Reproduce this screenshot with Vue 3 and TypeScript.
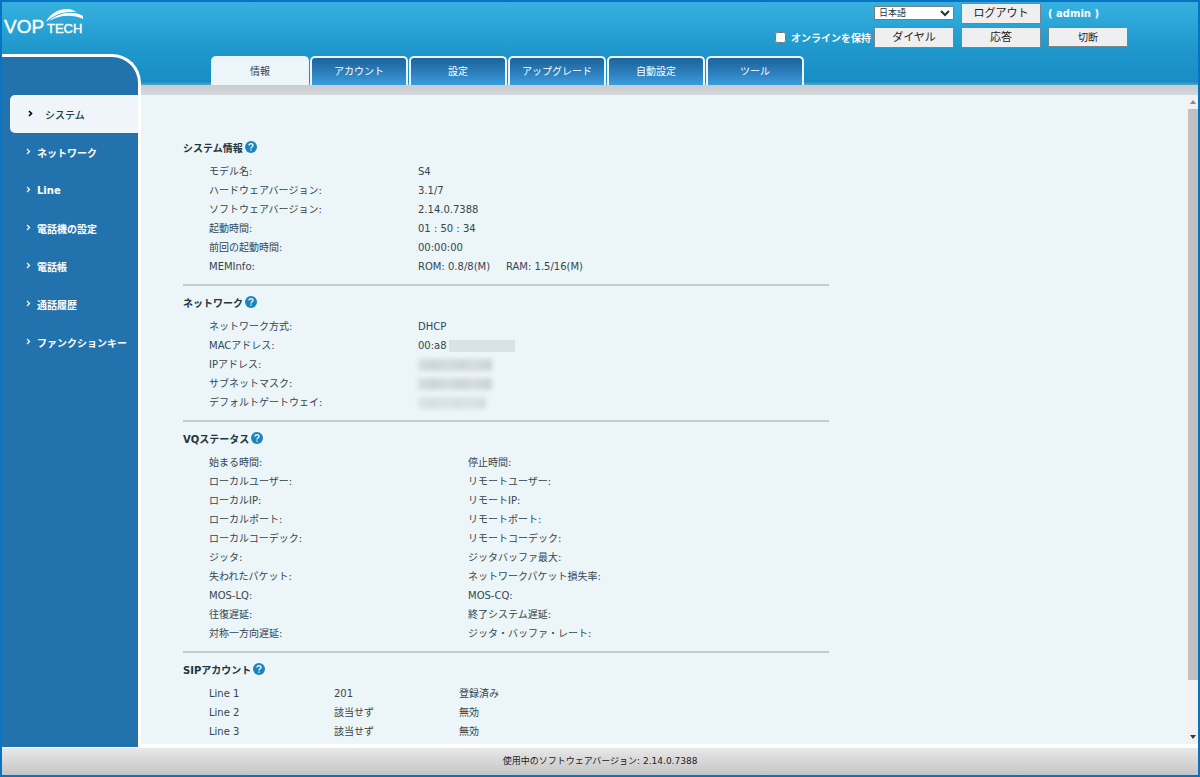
<script setup lang="ts">
import { ref } from 'vue'

interface Row {
  label: string
  value?: string
  masked?: 'flat' | 'wide' | 'short'
}

const language = ref('ja')
const keepOnline = ref(false)

const tabs: string[] = ['情報', 'アカウント', '設定', 'アップグレード', '自動設定', 'ツール']
const menu: string[] = ['システム', 'ネットワーク', 'Line', '電話機の設定', '電話帳', '通話履歴', 'ファンクションキー']

const sections: { title: string; rows: Row[] }[] = [
  {
    title: 'システム情報',
    rows: [
      { label: 'モデル名:', value: 'S4' },
      { label: 'ハードウェアバージョン:', value: '3.1/7' },
      { label: 'ソフトウェアバージョン:', value: '2.14.0.7388' },
      { label: '起動時間:', value: '01 : 50 : 34' },
      { label: '前回の起動時間:', value: '00:00:00' },
      { label: 'MEMInfo:', value: 'ROM: 0.8/8(M)\u00a0\u00a0\u00a0\u00a0\u00a0RAM: 1.5/16(M)' },
    ],
  },
  {
    title: 'ネットワーク',
    rows: [
      { label: 'ネットワーク方式:', value: 'DHCP' },
      { label: 'MACアドレス:', value: '00:a8', masked: 'flat' },
      { label: 'IPアドレス:', masked: 'wide' },
      { label: 'サブネットマスク:', masked: 'wide' },
      { label: 'デフォルトゲートウェイ:', masked: 'short' },
    ],
  },
]

const quality: [string, string][] = [
  ['始まる時間:', '停止時間:'],
  ['ローカルユーザー:', 'リモートユーザー:'],
  ['ローカルIP:', 'リモートIP:'],
  ['ローカルポート:', 'リモートポート:'],
  ['ローカルコーデック:', 'リモートコーデック:'],
  ['ジッタ:', 'ジッタバッファ最大:'],
  ['失われたパケット:', 'ネットワークパケット損失率:'],
  ['MOS-LQ:', 'MOS-CQ:'],
  ['往復遅延:', '終了システム遅延:'],
  ['対称一方向遅延:', 'ジッタ・バッファ・レート:'],
]

const accounts: [string, string, string][] = [
  ['Line 1', '201', '登録済み'],
  ['Line 2', '該当せず', '無効'],
  ['Line 3', '該当せず', '無効'],
]
</script>

<template>
  <div class="frame">
    <header class="top">
      <svg class="logo" viewBox="0 0 82 28" role="img" aria-label="VOPTECH">
        <text x="0" y="25" font-size="19">VOP</text>
        <text x="43" y="25" font-size="13">TECH</text>
        <path d="M42 14 C46 5 55 1 63 1 C68 1 71 3 72 4 C60 3 50 7 42 14Z" />
        <path d="M45 13 C54 5 69 2 79 8 L79 11 C68 6 56 7 45 13Z" />
      </svg>
      <div class="controls">
        <div class="line">
          <select v-model="language" class="lang" aria-label="言語">
            <option value="ja">日本語</option>
            <option value="en">English</option>
          </select>
          <button type="button" class="btn">ログアウト</button>
          <span class="user">( admin )</span>
        </div>
        <div class="line">
          <label class="keep"><input v-model="keepOnline" type="checkbox" />オンラインを保持</label>
          <button type="button" class="btn">ダイヤル</button>
          <button type="button" class="btn">応答</button>
          <button type="button" class="btn small">切断</button>
        </div>
      </div>
    </header>

    <nav class="tabs">
      <a v-for="(tab, i) in tabs" :key="tab" href="#" class="tab" :class="{ active: i === 0 }">{{ tab }}</a>
    </nav>

    <nav class="side">
      <a v-for="(item, i) in menu" :key="item" href="#" class="item" :class="{ active: i === 0 }">
        <svg class="chevron" viewBox="0 0 5 7" aria-hidden="true"><path d="M1 1 L3.5 3.5 L1 6" /></svg>{{ item }}
      </a>
    </nav>

    <div class="body">
      <main class="content">
        <section v-for="s in sections" :key="s.title">
          <h2>
            {{ s.title }}
            <svg class="help" viewBox="0 0 12 12" aria-hidden="true">
              <circle cx="6" cy="6" r="6" />
              <path d="M4 4.6 C4 2 8.2 2.2 8 4.4 C7.9 5.8 6 5.7 6 7.4 M6 8.6 V9.8" />
            </svg>
          </h2>
          <table>
            <tbody>
              <tr v-for="r in s.rows" :key="r.label">
                <th scope="row" class="c-label">{{ r.label }}</th>
                <td>{{ r.value }}<span v-if="r.masked" class="mask" :class="r.masked"></span></td>
              </tr>
            </tbody>
          </table>
        </section>

        <section>
          <h2>
            VQステータス
            <svg class="help" viewBox="0 0 12 12" aria-hidden="true">
              <circle cx="6" cy="6" r="6" />
              <path d="M4 4.6 C4 2 8.2 2.2 8 4.4 C7.9 5.8 6 5.7 6 7.4 M6 8.6 V9.8" />
            </svg>
          </h2>
          <table>
            <tbody>
              <tr v-for="q in quality" :key="q[0]">
                <td class="c-quality">{{ q[0] }}</td>
                <td>{{ q[1] }}</td>
              </tr>
            </tbody>
          </table>
        </section>

        <section>
          <h2>
            SIPアカウント
            <svg class="help" viewBox="0 0 12 12" aria-hidden="true">
              <circle cx="6" cy="6" r="6" />
              <path d="M4 4.6 C4 2 8.2 2.2 8 4.4 C7.9 5.8 6 5.7 6 7.4 M6 8.6 V9.8" />
            </svg>
          </h2>
          <table>
            <tbody>
              <tr v-for="a in accounts" :key="a[0]">
                <th scope="row" class="c-account">{{ a[0] }}</th>
                <td class="c-account">{{ a[1] }}</td>
                <td>{{ a[2] }}</td>
              </tr>
            </tbody>
          </table>
        </section>
      </main>
      <div class="scroll" aria-hidden="true">
        <svg class="arrow up" viewBox="0 0 6 4"><path d="M3 0 L6 4 H0Z" /></svg>
        <div class="track"><div class="thumb"></div></div>
        <svg class="arrow down" viewBox="0 0 6 4"><path d="M0 0 H6 L3 4Z" /></svg>
      </div>
    </div>

    <footer class="foot">使用中のソフトウェアバージョン: 2.14.0.7388</footer>
  </div>
</template>

<style>
body {
  margin: 0;
}
</style>

<style scoped>
.frame,
.frame * {
  box-sizing: border-box;
}

.frame {
  display: grid;
  grid-template-columns: 139px 1fr;
  grid-template-rows: 52px 31px 1fr 28px;
  height: 100vh;
  border: 2px solid #0873c2;
  background:
    linear-gradient(#36b1df, #1f98cd 56%, #198cc5 96%, #55a9d0) top / 100% 83px no-repeat,
    linear-gradient(#c9cbce, #d6d9dc) 0 83px / 100% 10px no-repeat,
    #ffffff;
  color: #34464f;
  font-family: "DejaVu Sans", "Noto Sans CJK JP", sans-serif;
  font-size: 10px;
}

.top {
  grid-column: 1 / -1;
  display: flex;
  justify-content: space-between;
  align-items: flex-start;
  padding-right: 70px;
}

.logo {
  width: 82px;
  height: 28px;
  margin: 6px 0 0 2px;
  fill: #ffffff;
  font-family: "Liberation Sans", Arial, sans-serif;
}

.logo text {
  stroke: #ffffff;
  stroke-width: 0.4;
}

.controls {
  display: flex;
  flex-direction: column;
  gap: 4px;
  padding-top: 1px;
}

.line {
  display: flex;
  justify-content: flex-end;
  align-items: center;
  gap: 7px;
  height: 20px;
}

.lang {
  width: 80px;
  height: 14px;
  padding: 0;
  border: 1px solid #6f7f88;
  border-radius: 0;
  background-color: #ffffff;
  color: #24343d;
  font-family: inherit;
  font-size: 9px;
  line-height: 12px;
}

.btn {
  width: 80px;
  height: 21px;
  padding: 0;
  border: 1px solid #74858d;
  border-radius: 1px;
  background: #efefef;
  color: #222222;
  font-family: inherit;
  font-size: 11px;
  line-height: 17px;
}

.btn.small {
  height: 20px;
  font-size: 10px;
}

.user {
  width: 80px;
  color: #ffffff;
  font-weight: bold;
}

.keep {
  display: flex;
  align-items: center;
  gap: 5px;
  margin-right: -4px;
  color: #ffffff;
  font-weight: bold;
}

.keep input {
  width: 11px;
  height: 11px;
  margin: 0;
}

.tabs {
  grid-column: 2;
  display: flex;
  gap: 1px;
  padding: 2px 0 0 70px;
}

.tab {
  width: 98px;
  height: 29px;
  border: 2px solid #e9f5fa;
  border-bottom: 0;
  border-radius: 5px 5px 0 0;
  background: linear-gradient(#1d639b, #2a7cba 50%, #3b9ddd);
  color: #ffffff;
  line-height: 27px;
  text-align: center;
  text-decoration: none;
}

.tab.active {
  background: #ecf5f9;
  color: #34464f;
}

.side {
  grid-column: 1;
  grid-row: 2 / 4;
  border-top: 3px solid #ffffff;
  border-right: 3px solid #ffffff;
  border-top-right-radius: 29px;
  background: #2273ad;
  padding-top: 38px;
}

.item {
  display: flex;
  align-items: center;
  gap: 6px;
  height: 38px;
  padding-left: 24px;
  color: #ffffff;
  font-weight: bold;
  text-decoration: none;
  white-space: nowrap;
}

.item.active {
  gap: 12px;
  margin-left: 8px;
  padding-left: 18px;
  border-radius: 5px 0 0 5px;
  background: #f0f5fa;
  color: #24404e;
  font-weight: 500;
}

.chevron {
  width: 5px;
  height: 7px;
  margin-bottom: 2px;
  fill: none;
  stroke: currentColor;
  stroke-width: 1.2;
}

.active .chevron {
  stroke: #000000;
  stroke-width: 1.6;
}

.body {
  grid-column: 2;
  grid-row: 3;
  display: flex;
  min-height: 0;
  margin-top: 10px;
  margin-bottom: 3px;
  background: #ecf5f8;
}

.content {
  flex: 1;
  overflow: hidden;
  padding: 36px 42px 0;
}

section {
  max-width: 646px;
  padding: 6px 0 8px;
  border-bottom: 2px solid #c8cacb;
}

section:last-child {
  border-bottom: 0;
}

h2 {
  display: flex;
  align-items: center;
  gap: 2px;
  height: 20px;
  margin: 0 0 5px;
  color: #24343d;
  font-size: 10px;
  font-weight: bold;
}

.help {
  width: 12px;
  height: 12px;
  fill: #1c83bc;
}

.help path {
  fill: none;
  stroke: #e6f4fa;
  stroke-width: 1.4;
}

table {
  margin-left: 26px;
  border-collapse: collapse;
}

tr {
  height: 19px;
}

th,
td {
  padding: 0;
  font-weight: normal;
  line-height: 19px;
  text-align: left;
  white-space: nowrap;
}

.c-label {
  width: 209px;
}

.c-quality {
  width: 259px;
}

.c-account {
  width: 125px;
}

.mask {
  display: inline-block;
  height: 12px;
  vertical-align: middle;
}

.mask.flat {
  width: 66px;
  margin-left: 2px;
  background: #dae2e5;
}

.mask.wide,
.mask.short {
  width: 74px;
  background: linear-gradient(90deg, #d7dfe3, #ccd5d9 20%, #d5dde1 40%, #cdd6da 60%, #d5dde1 75%, #cad3d7);
  filter: blur(2px);
}

.mask.short {
  width: 68px;
  opacity: 0.7;
}

.scroll {
  display: flex;
  flex-direction: column;
  align-items: center;
  width: 11px;
  background: #f1f1f1;
}

.arrow {
  width: 6px;
  height: 4px;
  margin: 5px 0;
  fill: #8a8a8a;
}

.arrow.down {
  fill: #333b42;
}

.track {
  flex: 1;
  align-self: stretch;
}

.thumb {
  width: 10px;
  height: 92%;
  margin-left: 1px;
  background: #c1c1c1;
}

.foot {
  grid-column: 1 / -1;
  border-top: 1px solid #ffffff;
  background: linear-gradient(#e8e8e8, #c5c5c5);
  color: #222222;
  font-size: 9px;
  line-height: 27px;
  text-align: center;
}
</style>
